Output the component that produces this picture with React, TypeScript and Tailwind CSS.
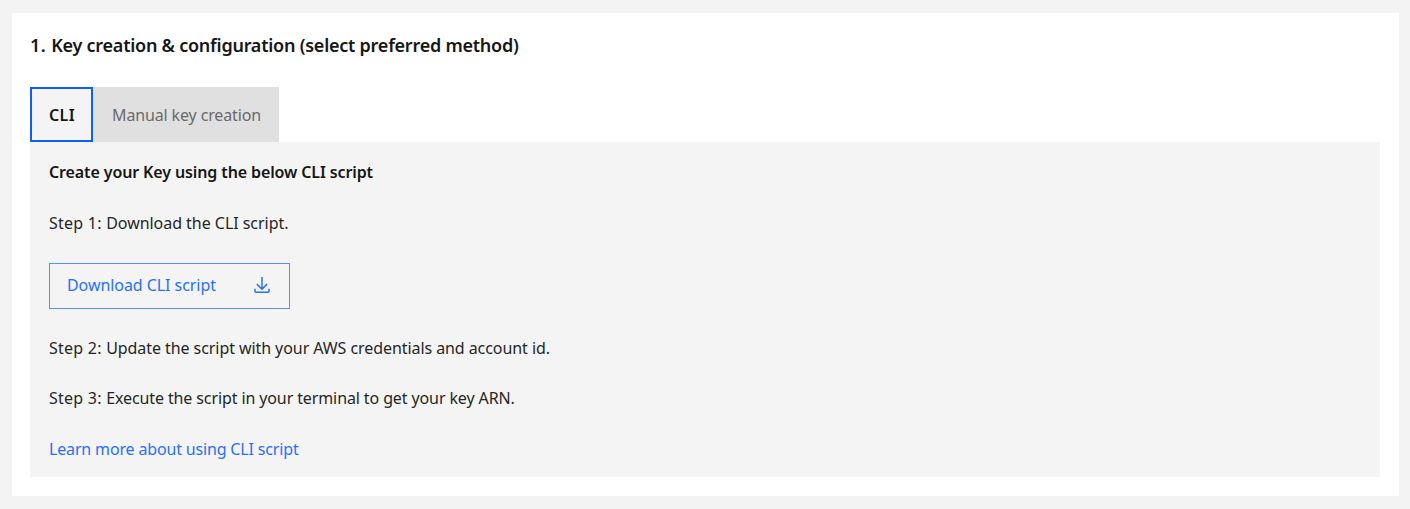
import type { ReactNode } from "react";

function DownloadIcon() {
  return (
    <svg
      width="16"
      height="18"
      viewBox="0 0 16 18"
      fill="none"
      stroke="currentColor"
      strokeWidth="1.5"
      aria-hidden="true"
    >
      <path d="M8 1v12M2.9 8.1 8 13.2l5.1-5.1M1 12.8v2.4q0 1 1 1h12q1 0 1-1v-2.4" />
    </svg>
  );
}

function Tabs() {
  return (
    <div role="tablist" className="mt-[30px] flex h-[55px]">
      <button
        role="tab"
        aria-selected="true"
        className="w-[63px] border-2 border-[#0f5ef7] bg-[#f4f4f4] pl-[17px] text-left font-semibold tracking-[0.4px] text-[#161616]"
      >
        CLI
      </button>
      <button
        role="tab"
        aria-selected="false"
        className="w-[186px] bg-[#e0e0e0] pl-[19px] text-left tracking-[-0.13px] whitespace-nowrap text-[#6a6a6a]"
      >
        Manual key creation
      </button>
    </div>
  );
}

function StepLabel({ children }: { children: ReactNode }) {
  return <span className="tracking-[0.25px]">{children}</span>;
}

export default function App() {
  return (
    <div className="h-[509px] bg-[#f3f3f3] pt-[13px] pr-[11px] pb-[13px] pl-3 font-['Noto_Sans',sans-serif] text-base leading-6 text-[#262626]">
      <section className="h-[483px] bg-white pt-5 pr-[19px] pl-[18px]">
        <h2 className="text-lg leading-6 font-semibold tracking-[-0.24px] text-[#161616]">
          <span className="tracking-[0.4px]">1. </span>
          Key creation &amp; configuration (select preferred method)
        </h2>
        <Tabs />
        <div role="tabpanel" className="flex h-[335px] flex-col items-start bg-[#f4f4f4] pt-[18px] pl-[19px]">
          <h3 className="font-semibold tracking-[-0.117px] text-[#161616]">
            Create your Key using the below CLI script
          </h3>
          <p className="mt-[27px] tracking-[-0.04px]">
            <StepLabel>Step 1: </StepLabel>Download the CLI script.
          </p>
          <button className="mt-7 flex h-[46px] w-[241px] items-center justify-between border border-[#5590fa] pr-[19px] pb-0.5 pl-[17px] tracking-[-0.06px] text-[#2870f8]">
            Download CLI script
            <DownloadIcon />
          </button>
          <p className="mt-[27px] tracking-[-0.07px]">
            <StepLabel>Step 2: </StepLabel>Update the script with your AWS credentials and account id.
          </p>
          <p className="mt-[26px] tracking-[-0.11px]">
            <StepLabel>Step 3: </StepLabel>Execute the script in your terminal to get your key ARN.
          </p>
          <a href="#" className="mt-[27px] tracking-[-0.16px] text-[#2870f8]">
            Learn more about using CLI script
          </a>
        </div>
      </section>
    </div>
  );
}
